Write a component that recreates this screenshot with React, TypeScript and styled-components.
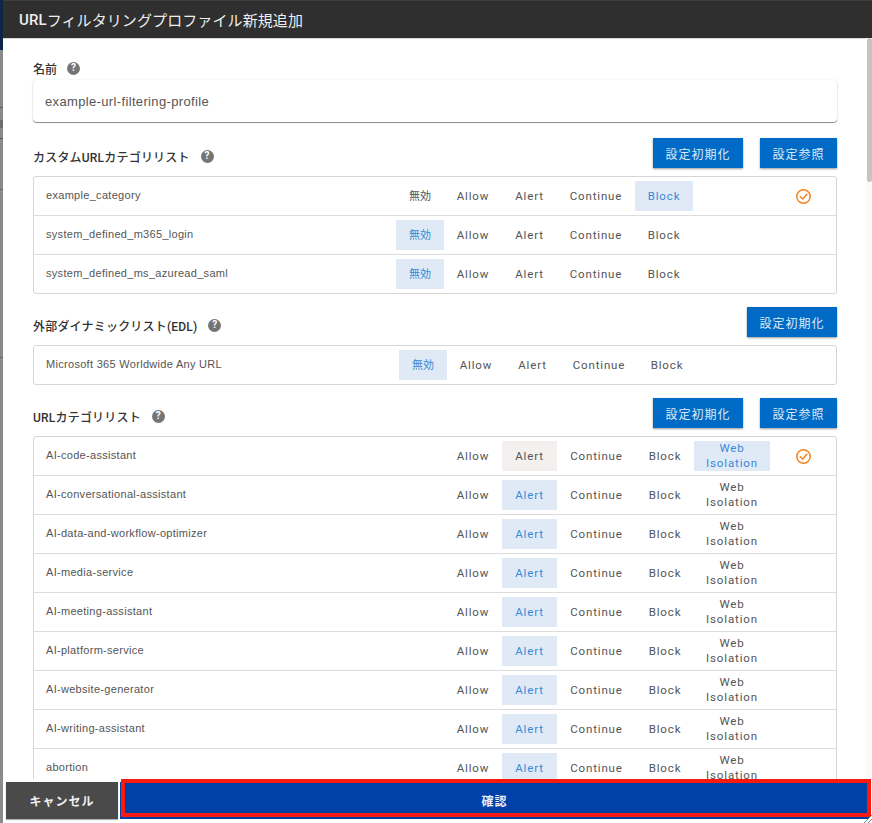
import React from "react";
import styled, { createGlobalStyle } from "styled-components";

const Global = createGlobalStyle`
  html, body { margin: 0; padding: 0; height: 100%; overflow: hidden; background: #8a8a8a; }
  #root { height: 100%; }
  * { box-sizing: border-box; }
`;

const FONT = `Roboto, "Noto Sans CJK JP", sans-serif`;
const LABEL_FONT = `"Liberation Sans", "Noto Sans CJK JP", sans-serif`;

const Page = styled.div`
  display: flex;
  height: 823px;
  width: 872px;
  overflow: hidden;
  font-family: ${FONT};
`;

const Backdrop = styled.div`
  flex: 0 0 3px;
  background:
    linear-gradient(#0e2547 0 50px, transparent 50px),
    linear-gradient(to bottom,
      transparent 107px, #555 107px 108px, transparent 108px 120px, #6e6e6e 120px 128px,
      transparent 128px 138px, #555 138px 139px, transparent 139px 189px, #666 189px 190px,
      transparent 190px 357px, #666 357px 358px, transparent 358px),
    #8a8a8a;
`;

const Dialog = styled.div`
  position: relative;
  flex: 1;
  display: flex;
  flex-direction: column;
  background: #fff;
  overflow: hidden;
`;

const Header = styled.header`
  flex: 0 0 38px;
  display: flex;
  align-items: center;
  padding: 0 16px;
  background: #2f2f2f;
  border-top: 1px solid #3d3d3d;
  color: #eeeeee;
  font-size: 15px;
  font-weight: 400;
  letter-spacing: 0.1px;
  box-shadow: 0 1px 0 #d8d8d8;
`;

const HeaderAccent = styled.span`
  font-weight: 500;
`;

const Body = styled.div`
  flex: 1;
  min-height: 0;
  overflow: hidden;
  padding: 23px 35px 0 30px;
`;

const FieldLabel = styled.div`
  display: flex;
  align-items: center;
  gap: 10px;
  height: 14px;
  margin-bottom: 5px;
  color: #333;
  font-size: 12px;
  font-weight: 500;
`;

const Help = styled.span`
  display: inline-flex;
  align-items: center;
  justify-content: center;
  width: 13px;
  height: 13px;
  border-radius: 50%;
  background: #757575;
  color: #fff;
  font-size: 10px;
  font-weight: 700;
  line-height: 1;
`;

const NameInput = styled.div`
  display: flex;
  align-items: center;
  height: 42px;
  padding: 0 12px;
  margin-bottom: 16px;
  border-radius: 4px;
  background: #fff;
  color: #555;
  font-family: ${LABEL_FONT};
  font-size: 13px;
  letter-spacing: 0.35px;
  box-shadow: 0 1px 1px rgba(0, 0, 0, 0.45), 0 0 3px rgba(0, 0, 0, 0.08);
`;

const SectionHead = styled.div`
  display: flex;
  align-items: center;
  gap: 17px;
  height: 30px;
  margin-bottom: 8px;
`;

const SectionTitle = styled(FieldLabel)`
  flex: 1;
  gap: 11px;
  height: auto;
  margin-bottom: 0;
  padding-top: 6px;
  letter-spacing: 0.2px;
`;

const ActionButton = styled.button`
  height: 30px;
  padding: 0 12.5px;
  border: 0;
  background: #006bc6;
  color: #dbe9f6;
  font-family: ${FONT};
  font-size: 12px;
  letter-spacing: 1px;
  box-shadow: 0 1px 2px rgba(0, 0, 0, 0.4);
`;

const Table = styled.div`
  border: 1px solid #d6d6d6;
  border-radius: 3px;
  margin-bottom: 13px;
`;

const Row = styled.div`
  display: flex;
  align-items: center;
  height: 38px;
  padding-left: 12px;
  & + & {
    height: 39px;
    border-top: 1px solid #dcdcdc;
  }
`;

const RowLabel = styled.div`
  flex: 1;
  padding-bottom: 2px;
  color: #555;
  font-family: ${LABEL_FONT};
  font-size: 11px;
  letter-spacing: 0.3px;
  white-space: nowrap;
`;

const Option = styled.div<{ $w: number; $state?: "on" | "pending"; $cjk?: boolean }>`
  flex: 0 0 ${(p) => p.$w}px;
  display: flex;
  align-items: center;
  justify-content: center;
  height: 30px;
  text-align: center;
  font-size: ${(p) => (p.$cjk ? "11px" : "11.5px")};
  line-height: 15px;
  letter-spacing: ${(p) => (p.$cjk ? "0" : "0.85px")};
  color: ${(p) => (p.$state === "on" ? "#3a8ad6" : "#555")};
  background: ${(p) =>
    p.$state === "on" ? "#dfeaf6" : p.$state === "pending" ? "#f3f0ef" : "transparent"};
`;

const Status = styled.div<{ $w: number }>`
  flex: 0 0 ${(p) => p.$w}px;
  display: flex;
  align-items: center;
  justify-content: flex-end;
  padding-right: 25px;
`;

const Footer = styled.footer`
  position: absolute;
  left: 0;
  right: 0;
  bottom: 0;
  height: 44px;
  display: flex;
  gap: 2px;
  padding: 3px 3px 4px 3px;
  background: #fff;
`;

const Cancel = styled.button`
  flex: 0 0 112px;
  border: 0;
  background: #4a4a4a;
  color: #f0f0f0;
  font-family: ${FONT};
  font-size: 12px;
  font-weight: 700;
  letter-spacing: 1px;
  box-shadow: 0 1px 1px rgba(0, 0, 0, 0.3);
`;

const Confirm = styled.button`
  flex: 1;
  border: 0;
  background: #0041a8;
  color: #e8eef8;
  font-family: ${FONT};
  font-size: 12px;
  font-weight: 700;
  letter-spacing: 1px;
`;

const Annotation = styled.div`
  position: absolute;
  left: 118px;
  right: 1px;
  bottom: 6px;
  height: 38px;
  border: 4px solid #fb1a0e;
  pointer-events: none;
`;

const ScrollTrack = styled.div`
  position: absolute;
  top: 38px;
  right: 0;
  bottom: 0;
  width: 6px;
  background: #fafafa;
`;

const ScrollThumb = styled.div`
  width: 5px;
  margin-left: 1px;
  height: 144px;
  border-radius: 3px;
  background: #c4c4c4;
`;

const Grip = styled.svg`
  position: absolute;
  right: 0;
  bottom: 0;
`;

const HelpIcon = () => <Help>?</Help>;

const CheckIcon = () => (
  <svg width="15" height="15" viewBox="0 0 15 15" fill="none" stroke="#f5821f" strokeWidth="1.5">
    <circle cx="7.5" cy="7.5" r="6.7" />
    <path d="M4.3 7.7 6.7 10 10.9 5.2" strokeLinecap="round" strokeLinejoin="round" />
  </svg>
);

type Opt = { t: string; w: number; s?: "on" | "pending" };

const opts = (labels: [string, number][], on: string): Opt[] =>
  labels.map(([t, w]) => ({ t, w, s: t === on ? "on" : undefined }));

const CUSTOM: [string, number][] = [
  ["無効", 48], ["Allow", 58], ["Alert", 55], ["Continue", 78], ["Block", 58],
];
const URLCAT: [string, number][] = [
  ["Allow", 58], ["Alert", 55], ["Continue", 79], ["Block", 58], ["Web Isolation", 76],
];

const urlNames = [
  "AI-conversational-assistant",
  "AI-data-and-workflow-optimizer",
  "AI-media-service",
  "AI-meeting-assistant",
  "AI-platform-service",
  "AI-website-generator",
  "AI-writing-assistant",
  "abortion",
];

const FilterRow = ({
  label, options, trail, check,
}: { label: string; options: Opt[]; trail: number; check?: boolean }) => (
  <Row>
    <RowLabel>{label}</RowLabel>
    {options.map((o) => (
      <Option key={o.t} $w={o.w} $state={o.s} $cjk={o.t === "無効"}>
        <span>{o.t}</span>
      </Option>
    ))}
    <Status $w={trail}>{check && <CheckIcon />}</Status>
  </Row>
);

export default function App() {
  return (
    <Page>
      <Global />
      <Backdrop />
      <Dialog>
        <Header><HeaderAccent>URL</HeaderAccent>フィルタリングプロファイル新規追加</Header>
        <Body>
          <FieldLabel>名前 <HelpIcon /></FieldLabel>
          <NameInput>example-url-filtering-profile</NameInput>

          <SectionHead>
            <SectionTitle>カスタムURLカテゴリリスト <HelpIcon /></SectionTitle>
            <ActionButton>設定初期化</ActionButton>
            <ActionButton>設定参照</ActionButton>
          </SectionHead>
          <Table>
            <FilterRow label="example_category" options={opts(CUSTOM, "Block")} trail={143} check />
            <FilterRow label="system_defined_m365_login" options={opts(CUSTOM, "無効")} trail={143} />
            <FilterRow label="system_defined_ms_azuread_saml" options={opts(CUSTOM, "無効")} trail={143} />
          </Table>

          <SectionHead>
            <SectionTitle>外部ダイナミックリスト(EDL) <HelpIcon /></SectionTitle>
            <ActionButton>設定初期化</ActionButton>
          </SectionHead>
          <Table>
            <FilterRow label="Microsoft 365 Worldwide Any URL" options={opts(CUSTOM, "無効")} trail={140} />
          </Table>

          <SectionHead>
            <SectionTitle>URLカテゴリリスト <HelpIcon /></SectionTitle>
            <ActionButton>設定初期化</ActionButton>
            <ActionButton>設定参照</ActionButton>
          </SectionHead>
          <Table>
            <FilterRow
              label="AI-code-assistant"
              options={opts(URLCAT, "Web Isolation").map((o) =>
                o.t === "Alert" ? { ...o, s: "pending" as const } : o
              )}
              trail={66}
              check
            />
            {urlNames.map((n) => (
              <FilterRow key={n} label={n} options={opts(URLCAT, "Alert")} trail={66} />
            ))}
          </Table>
        </Body>
        <ScrollTrack><ScrollThumb /></ScrollTrack>
        <Footer>
          <Cancel>キャンセル</Cancel>
          <Confirm>確認</Confirm>
        </Footer>
        <Annotation />
        <Grip width="9" height="9" viewBox="0 0 9 9" stroke="#8a8a8a" strokeWidth="1">
          <path d="M1 9 9 1M5 9 9 5" />
        </Grip>
      </Dialog>
    </Page>
  );
}
